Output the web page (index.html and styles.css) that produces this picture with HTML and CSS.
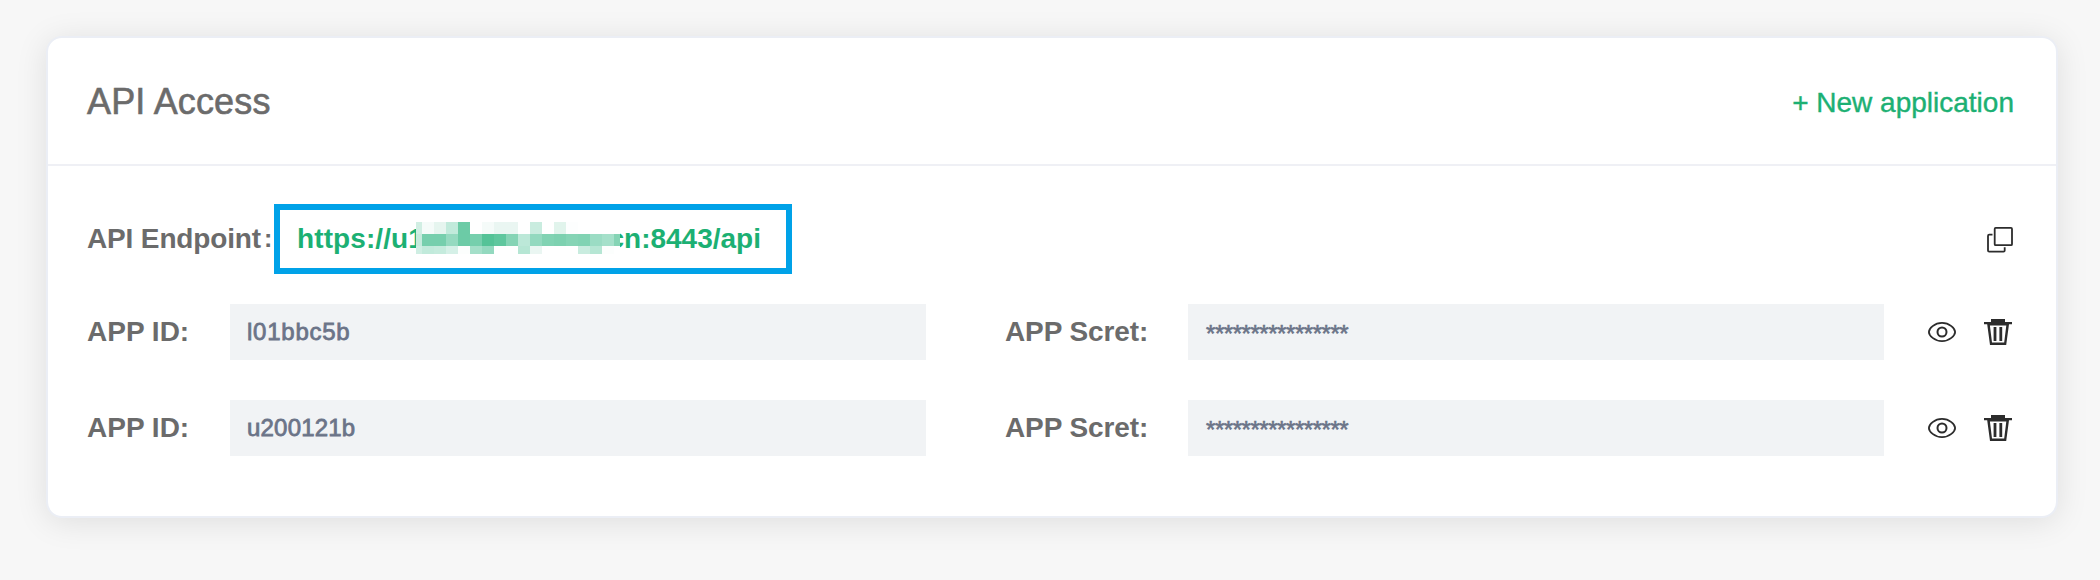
FILE: index.html
```html
<!DOCTYPE html>
<html lang="en">
<head>
<meta charset="utf-8">
<title>API Access</title>
<link rel="stylesheet" href="styles.css">
</head>
<body>
<svg class="defs" aria-hidden="true">
  <symbol id="eye" viewBox="0 0 28 20"><g fill="none" stroke="#2c2c2c"><path d="M.9 10C.9 6.500 6.500 .9 14 .9S27.100 6.500 27.100 10S21.500 19.100 14 19.100S.9 13.500 .9 10Z" stroke-width="1.800"/><circle cx="14" cy="10" r="4.500" stroke-width="2"/></g></symbol>
  <symbol id="trash" viewBox="0 0 28 26"><path fill="#2c2c2c" fill-rule="evenodd" d="M7 0H21V3H28V5.300H25L22.200 26H6L3.200 5.300H0V3H7ZM5.900 6.500L8 23.500H20.200L22.300 6.500Z"/><path d="M11 8V22M16.800 8V22" fill="none" stroke="#2c2c2c" stroke-width="2.800"/></symbol>
</svg>
<main class="card">
  <header class="card-header">
    <h1 class="title">API Access</h1>
    <a class="new-app">+ New application</a>
  </header>
  <section class="card-body">
    <div class="endpoint">
      <span class="endpoint-label">API Endpoint<span class="wide-colon">:</span></span>
      <div class="url-box">
        <span class="url-start">https://u1</span>
        <svg class="mosaic" width="204" height="32" shape-rendering="crispEdges">
          <path fill="#fff" d="M0 0h204v32H0z"/>
          <g>
            <path fill="#d1eee3" d="M0 0h6v12H0z"/><path fill="#f5fbf9" d="M6 0h12v12H6zM66 0h12v12H66z"/><path fill="#e6f5ef" d="M18 0h12v12H18z"/><path fill="#c1eadb" d="M30 0h12v12H30z"/><path fill="#6ccba6" d="M42 0h12v24H42z"/><path fill="#eaf6f2" d="M78 0h24v12H78z"/><path fill="#c9ecdf" d="M114 0h12v12h-12z"/><path fill="#e1f4ec" d="M138 0h12v12h-12z"/><path fill="#fdfefe" d="M150 0h12v12h-12z"/>
          </g>
          <g>
            <path fill="#c5ebdd" d="M0 12h6v12H0z"/><path fill="#76cfad" d="M6 12h24v12H6zM54 12h12v12H54z"/><path fill="#95dac0" d="M30 12h12v12H30z"/><path fill="#54c397" d="M66 12h12v12H66z"/><path fill="#5fc79e" d="M78 12h12v12H78z"/><path fill="#85d4b5" d="M90 12h12v12H90zM150 12h12v12h-12zM198 12h6v12h-6z"/><path fill="#bce8d8" d="M102 12h12v12h-12z"/><path fill="#93d9bf" d="M114 12h12v12h-12z"/><path fill="#81d3b3" d="M126 12h12v12h-12zM162 12h12v12h-12z"/><path fill="#7dd1b0" d="M138 12h12v12h-12z"/><path fill="#9bdcc4" d="M174 12h12v12h-12z"/><path fill="#a5e0ca" d="M186 12h12v12h-12z"/>
          </g>
          <g>
            <path fill="#cfeee3" d="M0 24h6v8H0z"/><path fill="#c1eadb" d="M6 24h12v8H6z"/><path fill="#c5ebdd" d="M18 24h12v8H18z"/><path fill="#d5f0e7" d="M30 24h12v8H30z"/><path fill="#fcfefd" d="M42 24h12v8H42zM186 24h12v8h-12z"/><path fill="#a4dfc9" d="M54 24h12v8H54z"/><path fill="#93d9bf" d="M66 24h12v8H66z"/><path fill="#b6e6d4" d="M102 24h12v8h-12zM174 24h12v8h-12z"/><path fill="#eaf6f2" d="M114 24h12v8h-12z"/><path fill="#c9ecdf" d="M162 24h12v8h-12z"/>
          </g>
        </svg>
        <span class="url-end">cn:8443/api</span>
      </div>
      <svg class="copy" width="26" height="26" viewBox="0 0 26 26" fill="none" stroke="#2c2c2c" stroke-width="1.800"><rect x="7.700" y=".9" width="17.300" height="17.300" rx="1"/><path d="M5.500 7.700H2.200Q1 7.700 1 8.900V23.500Q1 24.700 2.200 24.700H16.500Q17.700 24.700 17.700 23.500V20.300"/></svg>
    </div>
    <div class="app-row">
      <span class="id-label">APP ID:</span>
      <div class="field"><span class="value value-a">l01bbc5b</span></div>
      <span class="secret-label">APP Scret:</span>
      <div class="field"><span class="value stars">****************</span></div>
      <svg class="eye"><use href="#eye"/></svg>
      <svg class="trash"><use href="#trash"/></svg>
    </div>
    <div class="app-row">
      <span class="id-label">APP ID:</span>
      <div class="field"><span class="value value-b">u200121b</span></div>
      <span class="secret-label">APP Scret:</span>
      <div class="field"><span class="value stars">****************</span></div>
      <svg class="eye"><use href="#eye"/></svg>
      <svg class="trash"><use href="#trash"/></svg>
    </div>
  </section>
</main>
</body>
</html>
```
FILE: styles.css
```css
* { box-sizing: border-box; }
body {
  margin: 0;
  height: 580px;
  padding: 36px 42px 0 46px;
  background: #f7f7f7;
  font-family: "Liberation Sans", Arial, sans-serif;
  font-size: 28px;
  color: #6b6b6b;
  overflow: hidden;
}
svg { display: block; flex: none; }
.defs { display: none; }
.card {
  height: 482px;
  background: #fff;
  border: 2px solid #ebeef5;
  border-radius: 16px;
  box-shadow: 0 4px 32px rgba(0, 0, 0, .1);
}
.card-header {
  display: flex;
  align-items: center;
  justify-content: space-between;
  height: 128px;
  padding: 0 42px 0 39px;
  border-bottom: 2px solid #eff0f5;
}
.title {
  margin: 0;
  padding-top: 1px;
  font-size: 36px;
  font-weight: 400;
  line-height: 40px;
  letter-spacing: .15px;
  -webkit-text-stroke: .6px #6b6b6b;
}
.new-app { color: #1cb073; line-height: 32px; padding-top: 4px; -webkit-text-stroke: .4px #1cb073; }
.card-body { padding: 38px 40px 60px 39px; }
.endpoint {
  display: flex;
  height: 70px;
  align-items: center;
  margin-bottom: 30px;
  font-weight: 700;
}
.endpoint-label {
  display: flex;
  align-items: center;
  width: 187px;
  flex: none;
  white-space: nowrap;
  letter-spacing: -.15px;
}
.wide-colon { margin: -2px 0 0 3px; font-size: 25px; }
.url-box {
  position: relative;
  display: flex;
  align-items: center;
  justify-content: space-between;
  width: 518px;
  height: 70px;
  padding: 0 25px 0 17px;
  border: 6px solid #00a2e8;
  color: #1cb073;
}
/* Pixelated strip over the private part of the host name */
.mosaic { position: absolute; left: 136px; top: 12px; }
.url-start { letter-spacing: .1px; }
.copy { margin: 2px 3px 0 auto; }
.app-row { display: flex; align-items: center; height: 56px; }
.app-row + .app-row { margin-top: 40px; }
.id-label, .secret-label { font-weight: 700; flex: none; white-space: nowrap; }
.id-label { width: 143px; }
.secret-label { width: 183px; margin-left: 79px; letter-spacing: -.1px; }
.field {
  display: flex;
  align-items: center;
  width: 696px;
  height: 56px;
  padding-left: 17px;
  background: #f1f3f5;
  color: #6b7488;
  font-size: 24px;
}
.value { -webkit-text-stroke: .8px #6b7488; }
.value-a { letter-spacing: .75px; }
.value-b { letter-spacing: .2px; }
.stars { padding: 4px 0 0 1px; letter-spacing: -.45px; -webkit-text-stroke-width: .6px; }
.eye { width: 28px; height: 20px; margin-left: 44px; }
.trash { width: 28px; height: 26px; margin-left: 28px; }
```
